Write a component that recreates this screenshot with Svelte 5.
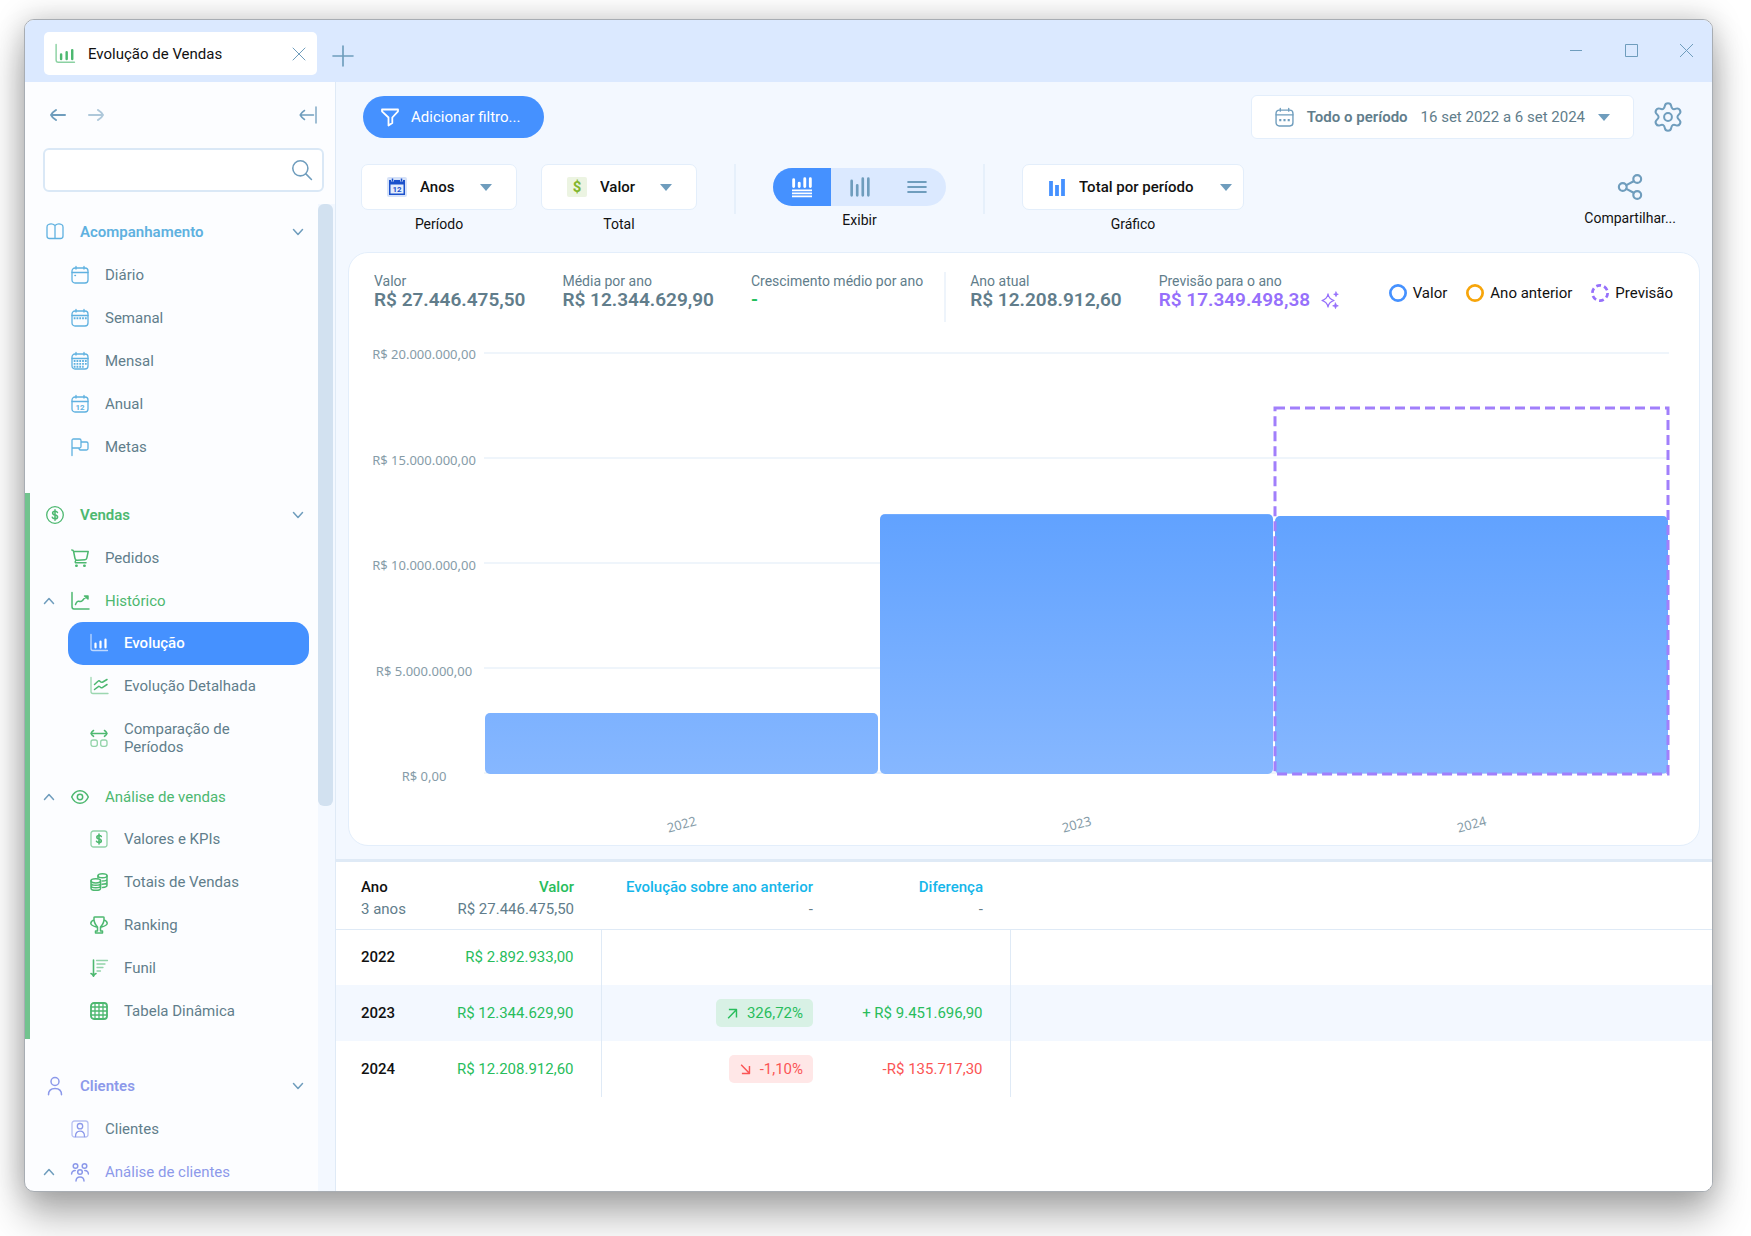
<script>
  const calendar = '<rect x="1" y="2" width="16" height="15" rx="3"/><path d="M5 .5V3M13 .5V3M1 6.500h16"/>';

  const icons = {
    chart: '<path opacity=".65" d="M1 .5v14q0 2 2 2h14.500"/><path stroke-width="2.200" d="M5.500 13.500v-4M10.500 13.500v-6M15.500 13.500v-8"/>',
    book: '<path d="M9 2.500v13M9 2.500C7 .8 4 .8 2.500 1.500Q1 2 1 4v9q0 2.500 2.500 2.500H14.500Q17 15.500 17 13V4q0-2-1.500-2.500C14 .8 11 .8 9 2.500z"/>',
    day: calendar + '<path stroke-width="1.600" d="M4 9.500h.4"/>',
    week: calendar + '<path stroke-linecap="butt" stroke-width="2" stroke-dasharray="1.800 1" d="M2.700 9.200h13"/>',
    month: calendar + '<path stroke-linecap="butt" stroke-width="1.900" stroke-dasharray="1.800 1" d="M2.700 9h13M2.700 11.900h13M2.700 14.700h10"/>',
    year: calendar + '<text x="9" y="14.500" text-anchor="middle" font-size="8" font-weight="700" fill="currentColor" stroke="none">12</text>',
    flag: '<path d="M1 17.500V2.500Q1 1 2.500 1h6Q10 1 10 2.500v6Q10 10 8.500 10H1M10 4h5.500Q17 4 17 5.500v5q0 1.500-1.500 1.500H9.500Q8 12 8 10"/>',
    dollar: '<circle cx="9" cy="9" r="8.300"/><path stroke-width="1.500" d="M11.500 6.500Q11 5.200 9 5.200 6.600 5.200 6.600 7 6.600 8.600 9 9 11.600 9.400 11.600 11 11.600 12.800 9 12.800 6.800 12.800 6.300 11.300M9 3.800v10.400"/>',
    cart: '<path stroke-width="1.500" d="M.8 1q1.500 0 1.800 1.500L4 9.500q.4 2 2.500 1.800l7.500-.6q1.500-.1 1.800-1.500L17.200 2.500H2.600M4.800 11.300q-1.500 2.500.7 2.500H15"/><path stroke-width="2.600" d="M5.300 16.700h.3M13.300 16.700h.3"/>',
    trend: '<path stroke-width="1.500" d="M1 .5v14q0 2.500 2 2.500h15M4.500 12.500Q6 8.500 8 9.300t3.500-.8Q13 6 16.500 4M13.500 4H17V7z"/>',
    lines: '<path opacity=".55" d="M1 .5v14q0 2 2 2h15"/><path stroke-width="1.500" d="M4.500 7.500L8 4.200q1-1 2.200.3t2.600.5L17 2.500M4.500 12.500L8 9.800q1.200-1 2.200.3t2.500.2L17 7.500"/>',
    compare: '<path stroke-width="1.600" d="M1.500 4.500h15M3.500 1.500Q1.800 2.500 1 4.500q.8 1.800 2.500 2.800M14.500 1.500q1.700 1 2.500 3-.8 1.800-2.500 2.800"/><g opacity=".6"><rect x="1" y="11" width="6.300" height="6.300" rx="2"/><rect x="10.700" y="11" width="6.300" height="6.300" rx="2"/></g>',
    eye: '<g stroke-width="1.500"><path d="M.7 9Q3.500 2.700 9 2.700t8.300 6.300Q14.500 15.300 9 15.300T.7 9z"/><circle cx="9" cy="9" r="2.700"/></g>',
    kpi: '<rect opacity=".6" x="1" y="1" width="16" height="16" rx="2.500"/><path stroke-width="1.600" d="M11.300 6.500Q10.800 5.500 9 5.500 6.800 5.500 6.800 7.200 6.800 8.600 9 9 11.300 9.400 11.300 10.900 11.300 12.500 9 12.500 7 12.500 6.500 11.300M9 4v10"/>',
    coins: '<g stroke-width="1.500"><path d="M8 5V2.800M17 2.800v9.400q0 2-4.500 2.200M17 6q0 2-4.500 2M17 9q0 2.200-5 2.200"/><ellipse cx="12.500" cy="2.800" rx="4.500" ry="2"/><path d="M1 7.800v7.400q0 2.100 4.800 2.100t4.800-2.100V7.800M1 10.300q0 2 4.800 2t4.800-2M1 12.800q0 2 4.800 2t4.800-2"/><ellipse cx="5.800" cy="7.800" rx="4.800" ry="2.100"/></g>',
    trophy: '<path stroke-width="1.500" d="M4 1.500Q4 1 5 1h8q1 0 1 .5.5 5.500-3.500 9.500V15h2v2h-7v-2h2v-4Q3.500 7 4 1.500zM4 4Q.8 5 .8 7.500 1 9.500 6.500 11M14 4q3.200 1 3.200 3.500Q17 9.500 11.500 11"/>',
    funnel: '<path stroke-width="1.600" d="M3.500 1v16M1 14.500q1.500.5 2.500 2.700Q4.500 15 6 14.500"/><path opacity=".6" d="M6.500 1.500h11M7 5h8M7 8.500h6M7 12h3.500"/>',
    grid: '<path d="M5 1v16M9 1v16M13 1v16M1 5h16M1 9h16M1 13h16"/><rect stroke-width="1.800" x="1" y="1" width="16" height="16" rx="3"/>',
    person: '<g stroke-width="1.500"><circle cx="9" cy="4.500" r="4"/><path d="M2.500 17.800q0-6.300 6.500-6.300t6.500 6.300"/></g>',
    card: '<rect opacity=".6" x="1" y="1" width="16" height="16" rx="2.500"/><circle cx="9" cy="6.200" r="2.700"/><path d="M4.500 16.500q0-5.300 4.500-5.300t4.500 5.300"/>',
    people: '<g stroke-width="1.500"><circle cx="4.500" cy="3" r="2.300"/><circle cx="13.500" cy="3" r="2.300"/><circle cx="9" cy="9" r="2.300"/><path d="M.6 11Q.8 7.800 4.200 7.600M17.400 11q-.2-3.200-3.600-3.400M5 18q.2-4 4-4t4 4"/></g>',
    filter: '<path stroke-width="1.800" d="M1 1.500h16v1.800L11.300 9.500v5.500L7.500 17.500V9.500L1 3.300z"/>',
    calendar: calendar + '<path stroke-linecap="butt" stroke-width="2" stroke-dasharray="2 2" d="M4 11.500h10"/>',
    sparkle: '<path d="M7 3q.8 5 6 6.500Q7.800 11 7 16 6.200 11 1 9.500 6.200 8 7 3z"/><path fill="currentColor" stroke-width=".8" d="M15 1l.6 1.700 1.700.6-1.700.6L15 5.600l-.6-1.700-1.700-.6 1.700-.6zM14.500 12l.8 2 2 .8-2 .8-.8 2-.8-2-2-.8 2-.8z"/>',
    search: '<g stroke-width="1.400"><circle cx="7.500" cy="7.500" r="6.800"/><path d="M12.500 12.500l5 5"/></g>',
    back: '<path stroke-width="2" d="M2 9h14M7 4Q3 6.500 2 9q1 2.500 5 5"/>',
    forward: '<path stroke-width="2" d="M2 9h14M11 4q4 2.500 5 5-1 2.500-5 5"/>',
    collapse: '<path stroke-width="1.500" d="M1.500 9H14.500M5.500 4.500Q3 6 1.200 9 3 12 5.500 13.500"/><path d="M17 1v16"/>',
    plus: '<path stroke-width="1.500" d="M9 0v18M0 9h18"/>',
    close: '<path stroke-width="1" d="M3 3l12 12M15 3L3 15"/>',
    down: '<path stroke-width="1.500" d="M4.500 6.500L9 11.500l4.500-5"/>',
    up: '<path stroke-width="1.500" d="M4.500 11.500L9 6.500l4.500 5"/>',
    share: '<g stroke-width="1.500"><circle cx="4" cy="9" r="2.700"/><circle cx="14" cy="3.500" r="2.700"/><circle cx="14" cy="14.500" r="2.700"/><path d="M6.500 7.700l5-2.700M6.500 10.300l5 2.700"/></g>',
    both: '<path stroke-width="2.600" d="M1.500 2.500v6M6.500 5.500v3M11.500 1.500v7M16.500 1.500v7"/><path stroke-linecap="butt" stroke-width="1.500" d="M0 12h18M0 14.800h18M0 17.500h18"/>',
    bars: '<path stroke-width="2.400" d="M1.500 3.500v13M6.500 7.500v9M11.500 1.500v15M16.500 1.500v15"/>',
    list: '<path stroke-width="1.700" d="M1 4.500h16M1 9h16M1 13.500h16"/>',
    solid: '<path stroke-width="3.800" stroke-linecap="butt" d="M3 3v15M9 7v11M15 1v17"/>',
    rise: '<path stroke-width="2" stroke-linecap="butt" d="M3 15.500L14 4M4 3.500h10.500V14.500"/>',
    fall: '<path stroke-width="2" stroke-linecap="butt" d="M3 2.500l11 11.500M4 14.500h10.500V4"/>',
    gear: '<circle cx="9" cy="9" r="2.500"/>' + gear()
  };

  // six rounded teeth around the centre of the 18px box
  function gear() {
    const points = [];
    for (let tooth = 0; tooth < 6; tooth++) {
      for (const [offset, radius] of [[-22, 6.1], [-11, 9], [11, 9], [22, 6.1]]) {
        const angle = ((tooth * 60 + offset - 90) * Math.PI) / 180;
        points.push([9 + radius * Math.cos(angle), 9 + radius * Math.sin(angle)]);
      }
    }
    const middle = (a, b) => `${(a[0] + b[0]) / 2} ${(a[1] + b[1]) / 2}`;
    let d = `M${middle(points[23], points[0])}`;
    points.forEach((p, i) => (d += `Q${p[0]} ${p[1]} ${middle(p, points[(i + 1) % 24])}`));
    return `<path d="${d}z"/>`;
  }

  const menu = [
    {
      title: "Acompanhamento", icon: "book", color: "#5fb1e0",
      items: [
        { label: "Diário", icon: "day" },
        { label: "Semanal", icon: "week" },
        { label: "Mensal", icon: "month" },
        { label: "Anual", icon: "year" },
        { label: "Metas", icon: "flag" }
      ]
    },
    {
      title: "Vendas", icon: "dollar", color: "#4db870", current: true,
      items: [
        { label: "Pedidos", icon: "cart" },
        {
          label: "Histórico", icon: "trend",
          children: [
            { label: "Evolução", icon: "chart" },
            { label: "Evolução Detalhada", icon: "lines" },
            { label: "Comparação de Períodos", icon: "compare" }
          ]
        },
        {
          label: "Análise de vendas", icon: "eye",
          children: [
            { label: "Valores e KPIs", icon: "kpi" },
            { label: "Totais de Vendas", icon: "coins" },
            { label: "Ranking", icon: "trophy" },
            { label: "Funil", icon: "funnel" },
            { label: "Tabela Dinâmica", icon: "grid" }
          ]
        }
      ]
    },
    {
      title: "Clientes", icon: "person", color: "#8c99ea",
      items: [
        { label: "Clientes", icon: "card" },
        { label: "Análise de clientes", icon: "people", children: [] }
      ]
    }
  ];

  const max = 20000000;
  const ticks = ["R$ 20.000.000,00", "R$ 15.000.000,00", "R$ 10.000.000,00", "R$ 5.000.000,00", "R$ 0,00"];
  const years = [
    { year: "2022", value: 2892933, text: "R$ 2.892.933,00" },
    { year: "2023", value: 12344629.9, text: "R$ 12.344.629,90", change: "326,72%", diff: "+ R$ 9.451.696,90", up: true },
    { year: "2024", value: 12208912.6, text: "R$ 12.208.912,60", change: "-1,10%", diff: "-R$ 135.717,30", up: false, forecast: 17349498.38 }
  ];

  const views = [
    { id: "both", label: "Gráfico e tabela" },
    { id: "bars", label: "Gráfico" },
    { id: "list", label: "Tabela" }
  ];

  let active = "Evolução";
  let view = "both";
</script>

{#snippet icon(name, size = 18)}
  <svg class="icon" width={size} height={size} viewBox="0 0 18 18" aria-hidden="true">{@html icons[name]}</svg>
{/snippet}

{#snippet caret()}
  <svg class="caret" width="12" height="7" viewBox="0 0 12 7" aria-hidden="true"><path d="M0 0h12L6 7z" fill="#6f9dbd" /></svg>
{/snippet}

<div class="desktop">
  <div class="window">
    <header class="titlebar">
      <div class="tab">
        <span class="tab-icon">{@render icon("chart", 20)}</span>
        <span class="tab-title">Evolução de Vendas</span>
        <button class="bare" aria-label="Fechar aba">{@render icon("close")}</button>
      </div>
      <button class="bare new-tab" aria-label="Nova aba">{@render icon("plus", 20)}</button>
      <div class="window-buttons">
        <button class="bare" aria-label="Minimizar"><svg width="13" height="13"><path d="M0 6.500h12" stroke="currentColor" /></svg></button>
        <button class="bare" aria-label="Maximizar"><svg width="13" height="13"><path d="M.5.5h12v12H.5z" fill="none" stroke="currentColor" /></svg></button>
        <button class="bare" aria-label="Fechar"><svg width="13" height="13"><path d="M0 0l13 13M13 0L0 13" stroke="currentColor" /></svg></button>
      </div>
    </header>

    <div class="body">
      <aside class="sidebar">
        <div class="history">
          <button class="bare" aria-label="Voltar">{@render icon("back")}</button>
          <button class="bare faded" aria-label="Avançar">{@render icon("forward")}</button>
          <button class="bare collapse" aria-label="Recolher menu">{@render icon("collapse")}</button>
        </div>
        <div class="search">
          <input type="text" aria-label="Pesquisar" />
          {@render icon("search", 20)}
        </div>

        <div class="scroller">
          <nav>
            {#each menu as group}
              <section class="group" class:current={group.current} style="--accent: {group.color}">
                <button class="row title">
                  {@render icon(group.icon)}
                  <span>{group.title}</span>
                  <span class="chevron">{@render icon("down")}</span>
                </button>
                {#each group.items as item}
                  {#if item.children}
                    <button class="row parent">
                      <span class="chevron">{@render icon("up")}</span>
                      {@render icon(item.icon)}
                      <span>{item.label}</span>
                    </button>
                    <div class="children">
                      {#each item.children as child}
                        <a
                          href="#{child.icon}"
                          class="row child"
                          class:active={active === child.label}
                          on:click|preventDefault={() => (active = child.label)}
                        >
                          {@render icon(child.icon)}
                          <span>{child.label}</span>
                        </a>
                      {/each}
                    </div>
                  {:else}
                    <a href="#{item.icon}" class="row item">
                      {@render icon(item.icon)}
                      <span>{item.label}</span>
                    </a>
                  {/if}
                {/each}
              </section>
            {/each}
          </nav>
          <div class="track"><div class="thumb"></div></div>
        </div>
      </aside>

      <main>
        <div class="bar">
          <button class="filter">{@render icon("filter")}<span>Adicionar filtro...</span></button>
          <button class="period">
            {@render icon("calendar", 19)}
            <strong>Todo o período</strong>
            <span>16 set 2022 a 6 set 2024</span>
            {@render caret()}
          </button>
          <button class="bare" aria-label="Configurações">{@render icon("gear", 28)}</button>
        </div>

        <div class="tools">
          <label class="field">
            <span class="select">
              <svg width="20" height="20" viewBox="0 0 20 20" aria-hidden="true">
                <rect width="20" height="20" rx="2" fill="#d6e2f8" />
                <path d="M2 3h16v15H2z" fill="#1b51cc" />
                <path d="M3.500 7.500h13v9h-13z" fill="#e4edfc" />
                <path d="M5.500 1.500v3M14.500 1.500v3" stroke="#d6e2f8" stroke-width="3" />
                <path d="M5.500 1.500v3M14.500 1.500v3" stroke="#1b51cc" stroke-width="1.500" />
                <text x="10" y="15" text-anchor="middle" font-size="8" font-weight="700" fill="#1b51cc">12</text>
              </svg>
              <select><option>Anos</option></select>
              {@render caret()}
            </span>
            <span class="caption">Período</span>
          </label>
          <label class="field">
            <span class="select">
              <span class="money" aria-hidden="true">$</span>
              <select><option>Valor</option></select>
              {@render caret()}
            </span>
            <span class="caption">Total</span>
          </label>
          <div class="divider"></div>
          <div class="field toggle-field">
            <div class="toggle" role="group" aria-label="Exibir">
              {#each views as v}
                <button class:on={view === v.id} aria-label={v.label} aria-pressed={view === v.id} on:click={() => (view = v.id)}>
                  {@render icon(v.id, 20)}
                </button>
              {/each}
            </div>
            <span class="caption">Exibir</span>
          </div>
          <div class="divider"></div>
          <label class="field">
            <span class="select wide">
              <span class="solid">{@render icon("solid")}</span>
              <select><option>Total por período</option></select>
              {@render caret()}
            </span>
            <span class="caption">Gráfico</span>
          </label>
          <button class="bare share">{@render icon("share", 26)}<span class="caption">Compartilhar...</span></button>
        </div>

        <section class="card">
          <div class="summary">
            <div class="kpi"><span>Valor</span><strong>R$ 27.446.475,50</strong></div>
            <div class="kpi"><span>Média por ano</span><strong>R$ 12.344.629,90</strong></div>
            <div class="kpi last"><span>Crescimento médio por ano</span><strong class="green">-</strong></div>
            <div class="kpi split"><span>Ano atual</span><strong>R$ 12.208.912,60</strong></div>
            <div class="kpi"><span>Previsão para o ano</span><strong class="violet">R$ 17.349.498,38 {@render icon("sparkle")}</strong></div>
            <ul class="legend">
              <li><svg width="18" height="18" viewBox="0 0 20 20"><circle cx="10" cy="10" r="8.500" stroke="#4591ff" /></svg>Valor</li>
              <li><svg width="18" height="18" viewBox="0 0 20 20"><circle cx="10" cy="10" r="8.500" stroke="#f7a50a" /></svg>Ano anterior</li>
              <li><svg width="18" height="18" viewBox="0 0 20 20"><circle cx="10" cy="10" r="8.500" stroke="#9670fb" stroke-dasharray="5.400 3.500" /></svg>Previsão</li>
            </ul>
          </div>

          <div class="chart">
            <div class="ticks">
              {#each ticks as tick}<span>{tick}</span>{/each}
            </div>
            <div class="plot">
              <div class="lines">
                {#each ticks as _}<i></i>{/each}
              </div>
              <div class="columns">
                {#each years as y}
                  <div class="column">
                    <div class="value" style="height: {(y.value / max) * 100}%"></div>
                    {#if y.forecast}
                      <svg class="forecast" style="height: {(y.forecast / max) * 100}%">
                        <rect width="100%" height="100%" />
                      </svg>
                    {/if}
                  </div>
                {/each}
              </div>
            </div>
            <div class="years">
              {#each years as y}<span>{y.year}</span>{/each}
            </div>
          </div>
        </section>

        <section class="data">
          <table>
            <thead>
              <tr>
                <th class="year">Ano<small>3 anos</small></th>
                <th class="amount green">Valor<small>R$ 27.446.475,50</small></th>
                <th class="evolution cyan">Evolução sobre ano anterior<small>-</small></th>
                <th class="difference cyan">Diferença<small>-</small></th>
                <th></th>
              </tr>
            </thead>
            <tbody>
              {#each years as y}
                <tr>
                  <td class="year">{y.year}</td>
                  <td class="amount green">{y.text}</td>
                  <td class="evolution">
                    {#if y.change}
                      <span class="badge" class:down={!y.up}>{@render icon(y.up ? "rise" : "fall", 13)}{y.change}</span>
                    {/if}
                  </td>
                  <td class="difference" class:green={y.up} class:red={!y.up}>{y.diff ?? ""}</td>
                  <td></td>
                </tr>
              {/each}
            </tbody>
          </table>
        </section>
      </main>
    </div>
  </div>
</div>

<style>
  :global(body) {
    margin: 0;
    background: #fff;
  }

  * {
    box-sizing: border-box;
  }

  .desktop {
    height: 100vh;
    padding: 19px 38px 44px 24px;
    overflow: hidden;
    font: 15px/18px Roboto, "Liberation Sans", sans-serif;
    color: #111;
  }

  .window {
    display: flex;
    flex-direction: column;
    height: 100%;
    overflow: hidden;
    border: 1px solid #a8adb3;
    border-radius: 10px;
    background: #fcfdff;
    box-shadow: 0 0 30px rgba(0, 0, 0, 0.22), 0 26px 38px rgba(0, 0, 0, 0.28);
  }

  button, select, input {
    font: inherit;
    color: inherit;
  }

  button {
    cursor: pointer;
  }

  .icon {
    flex: none;
    fill: none;
    stroke: currentColor;
    stroke-width: 1.3px;
    stroke-linecap: round;
    stroke-linejoin: round;
    overflow: visible;
  }

  .bare {
    display: flex;
    padding: 0;
    border: 0;
    background: none;
    color: #6f9dbd;
  }

  .caret {
    flex: none;
    pointer-events: none;
  }

  /* title bar */
  .titlebar {
    display: flex;
    flex: none;
    height: 62px;
    padding: 0 19px;
    background: #dbe9ff;
  }

  .tab {
    display: flex;
    align-items: center;
    width: 273px;
    height: 43px;
    margin-top: 12px;
    padding: 0 9px 0 11px;
    border-radius: 5px;
    background: #fff;
  }

  .tab-icon {
    display: flex;
    margin-right: 13px;
    color: #4db870;
  }

  .tab-title {
    flex: 1;
  }

  .new-tab {
    align-items: center;
    margin: 10px 0 0 16px;
  }

  .window-buttons {
    display: flex;
    align-items: flex-start;
    gap: 42px;
    margin-left: auto;
    padding-top: 24px;
  }

  .body {
    display: flex;
    flex: 1;
    min-height: 0;
  }

  /* sidebar */
  .sidebar {
    display: flex;
    flex: none;
    flex-direction: column;
    width: 311px;
    border-right: 1px solid #dfeaf6;
  }

  .history {
    display: flex;
    align-items: center;
    gap: 20px;
    padding: 24px 18px 0 24px;
  }

  .faded {
    opacity: 0.55;
  }

  .collapse {
    margin-left: auto;
  }

  .search {
    display: flex;
    align-items: center;
    height: 44px;
    margin: 24px 11px 12px 18px;
    padding-right: 10px;
    border: 2px solid #dae8f6;
    border-radius: 6px;
    background: #fff;
    color: #6f9dbd;
  }

  .search input {
    flex: 1;
    min-width: 0;
    height: 100%;
    padding: 0 12px;
    border: 0;
    outline: none;
    background: none;
  }

  .scroller {
    display: flex;
    flex: 1;
    min-height: 0;
    overflow: hidden;
  }

  nav {
    flex: 1;
    padding-top: 6px;
  }

  .track {
    width: 17px;
    background: #f3f8ff;
  }

  .thumb {
    width: 15px;
    height: 61%;
    border-radius: 6px;
    background: #d2e1f0;
  }

  .group {
    margin-bottom: 25px;
  }

  .current {
    border-left: 5px solid #72c38e;
  }

  .current .row {
    margin-left: -5px;
  }

  .row {
    display: flex;
    align-items: center;
    width: 293px;
    min-height: 43px;
    padding: 0 16px 0 46px;
    border: 0;
    background: none;
    color: #617d8b;
    text-align: left;
    text-decoration: none;
  }

  .row > .icon {
    margin-right: 16px;
    color: var(--accent);
  }

  .title {
    padding-left: 21px;
    color: var(--accent);
    font-weight: 600;
  }

  .chevron {
    display: flex;
    color: #6f9dbd;
  }

  .title .chevron {
    margin-left: auto;
    margin-right: -5px;
  }

  .parent {
    padding-left: 15px;
    color: var(--accent);
  }

  .parent .chevron {
    margin-right: 13px;
  }

  .children {
    padding-bottom: 6px;
  }

  .child,
  .current .child {
    width: 241px;
    margin-left: 43px;
    padding: 12px 60px 13px 22px;
    border-radius: 15px;
  }

  .current .child {
    margin-left: 38px;
  }

  .child span {
    flex: 1;
    margin-right: -22px;
  }

  .active,
  .active > .icon {
    background: #4591ff;
    color: #fff;
  }

  .active {
    font-weight: 500;
  }

  /* main area */
  main {
    display: flex;
    flex: 1;
    flex-direction: column;
    min-width: 0;
    background: #f3f8ff;
  }

  .bar {
    display: flex;
    align-items: center;
    height: 44px;
    margin: 13px 30px 25px 27px;
  }

  .filter {
    display: flex;
    align-items: center;
    gap: 12px;
    width: 181px;
    height: 42px;
    padding: 0 18px;
    border: 0;
    border-radius: 21px;
    background: #4591ff;
    color: #fff;
    white-space: nowrap;
  }

  .period {
    display: flex;
    align-items: center;
    height: 44px;
    margin: 0 20px 0 auto;
    padding: 0 23px;
    border: 1px solid #e3eefb;
    border-radius: 6px;
    background: #fff;
    color: #617d8b;
  }

  .period > .icon {
    color: #6f9dbd;
  }

  .period strong {
    margin: 0 13px;
    font-weight: 600;
  }

  .period .caret {
    margin-left: 13px;
  }

  .tools {
    display: flex;
    align-items: flex-start;
    height: 69px;
    margin: 0 36px 19px 25px;
  }

  .field {
    display: flex;
    flex-direction: column;
    align-items: center;
    gap: 5px;
  }

  .field + .field {
    margin-left: 24px;
  }

  .select {
    display: flex;
    align-items: center;
    width: 156px;
    height: 46px;
    padding: 0 24px 0 25px;
    border: 1px solid #e3eefb;
    border-radius: 7px;
    background: #fff;
  }

  .select select {
    flex: 1;
    min-width: 0;
    margin-left: 13px;
    padding: 0;
    border: 0;
    outline: none;
    background: none;
    font-weight: 500;
    color: #111;
    appearance: none;
  }

  .wide {
    width: 222px;
    padding-right: 11px;
  }

  .solid {
    display: flex;
    color: #4591ff;
  }

  .money {
    width: 20px;
    border-radius: 2px;
    background: #ecf4e2;
    color: #82b62c;
    font-weight: 700;
    line-height: 20px;
    text-align: center;
  }

  .caption {
    color: #111;
    font-size: 14px;
  }

  .divider {
    width: 2px;
    height: 50px;
    margin: 0 37px;
    background: #e6f0fb;
  }

  .toggle-field {
    padding-top: 4px;
  }

  .toggle {
    display: flex;
    width: 173px;
    height: 38px;
    overflow: hidden;
    border-radius: 19px;
    background: #dbe9ff;
  }

  .toggle button {
    display: flex;
    flex: 1;
    align-items: center;
    justify-content: center;
    padding: 0;
    border: 0;
    background: none;
    color: #6f9dbd;
  }

  .toggle .on {
    background: #4591ff;
    color: #fff;
  }

  .share {
    flex-direction: column;
    align-items: center;
    gap: 9px;
    margin-left: auto;
    padding-top: 10px;
  }

  /* chart card */
  .card {
    margin: 0 12px 13px;
    padding-bottom: 12px;
    border: 1px solid #e3eefb;
    border-radius: 20px;
    background: #fff;
  }

  .summary {
    display: flex;
    height: 50px;
    margin: 19px 26px 30px 25px;
  }

  .kpi {
    display: flex;
    flex-direction: column;
    margin-right: 37px;
    color: #617d8b;
    font-size: 14px;
    white-space: nowrap;
  }

  .kpi strong {
    display: flex;
    align-items: center;
    gap: 11px;
    font-size: 19px;
    font-weight: 600;
    line-height: 20px;
  }

  .last {
    margin-right: 21px;
  }

  .split {
    padding-left: 24px;
    border-left: 2px solid #eef4fb;
  }

  .kpi .green {
    color: #22c05c;
  }

  .kpi .violet {
    color: #9670fb;
  }

  .legend {
    display: flex;
    align-self: flex-start;
    gap: 19px;
    margin: 12px 0 0 auto;
    padding: 0;
    list-style: none;
    white-space: nowrap;
  }

  .legend li {
    display: flex;
    align-items: center;
    gap: 6px;
  }

  .legend circle {
    fill: none;
    stroke-width: 3px;
  }

  .chart {
    display: grid;
    grid-template-columns: 106px 1fr;
    column-gap: 7px;
    margin: 0 30px 0 22px;
    color: #869ca8;
    font: 13px/18px "Noto Sans", sans-serif;
  }

  .ticks {
    display: flex;
    flex-direction: column;
    align-items: center;
    justify-content: space-between;
    margin: -7px 0 -11px;
    white-space: nowrap;
  }

  .plot {
    display: grid;
    height: 422px;
  }

  .lines,
  .columns {
    display: flex;
    grid-area: 1 / 1;
  }

  .lines {
    flex-direction: column;
    justify-content: space-between;
  }

  .lines i {
    height: 2px;
    background: #eff5fb;
  }

  .column {
    position: relative;
    display: flex;
    flex: 1;
    align-items: flex-end;
    margin: 0 1px;
  }

  .value {
    flex: 1;
    border-radius: 5px;
    background: linear-gradient(to top, #86b7ff, #61a2ff) bottom / 100% 260px;
  }

  .forecast {
    position: absolute;
    bottom: 0;
    left: 0;
    width: 100%;
    overflow: visible;
  }

  .forecast rect {
    fill: none;
    stroke: #a17ffb;
    stroke-width: 3px;
    stroke-dasharray: 10 5;
  }

  .years {
    display: flex;
    grid-column: 2;
    margin-top: 41px;
  }

  .years span {
    flex: 1;
    text-align: center;
    transform: rotate(-15deg);
  }

  /* data table */
  .data {
    flex: 1;
    border-top: 3px solid #dfeaf6;
    background: #fff;
  }

  table {
    width: 100%;
    border-collapse: collapse;
    table-layout: fixed;
  }

  th, td {
    padding: 0 27px 0 0;
    text-align: right;
    white-space: nowrap;
  }

  th {
    height: 67px;
    padding-top: 6px;
    border-bottom: 1px solid #dfeaf6;
    font-weight: 500;
    line-height: 22px;
  }

  small {
    display: block;
    color: #617d8b;
    font-size: 15px;
    font-weight: 400;
  }

  td {
    height: 56px;
  }

  tbody tr:nth-child(even) {
    background: #f3f8ff;
  }

  .year {
    width: 100px;
    padding-left: 25px;
    padding-right: 0;
    text-align: left;
    font-weight: 500;
  }

  .amount {
    width: 165px;
  }

  .evolution {
    width: 239px;
  }

  .difference {
    width: 170px;
  }

  td.amount,
  td.difference {
    border-right: 1px solid #dfeaf6;
  }

  .green {
    color: #28bd5c;
  }

  .cyan {
    color: #15b6ea;
  }

  .red {
    color: #fb5555;
  }

  .badge {
    display: inline-flex;
    align-items: center;
    gap: 8px;
    height: 28px;
    padding: 0 10px;
    border-radius: 5px;
    background: #d8f1e5;
    color: #28bd5c;
  }

  .down {
    background: #ffe7e7;
    color: #fb5555;
  }
</style>
